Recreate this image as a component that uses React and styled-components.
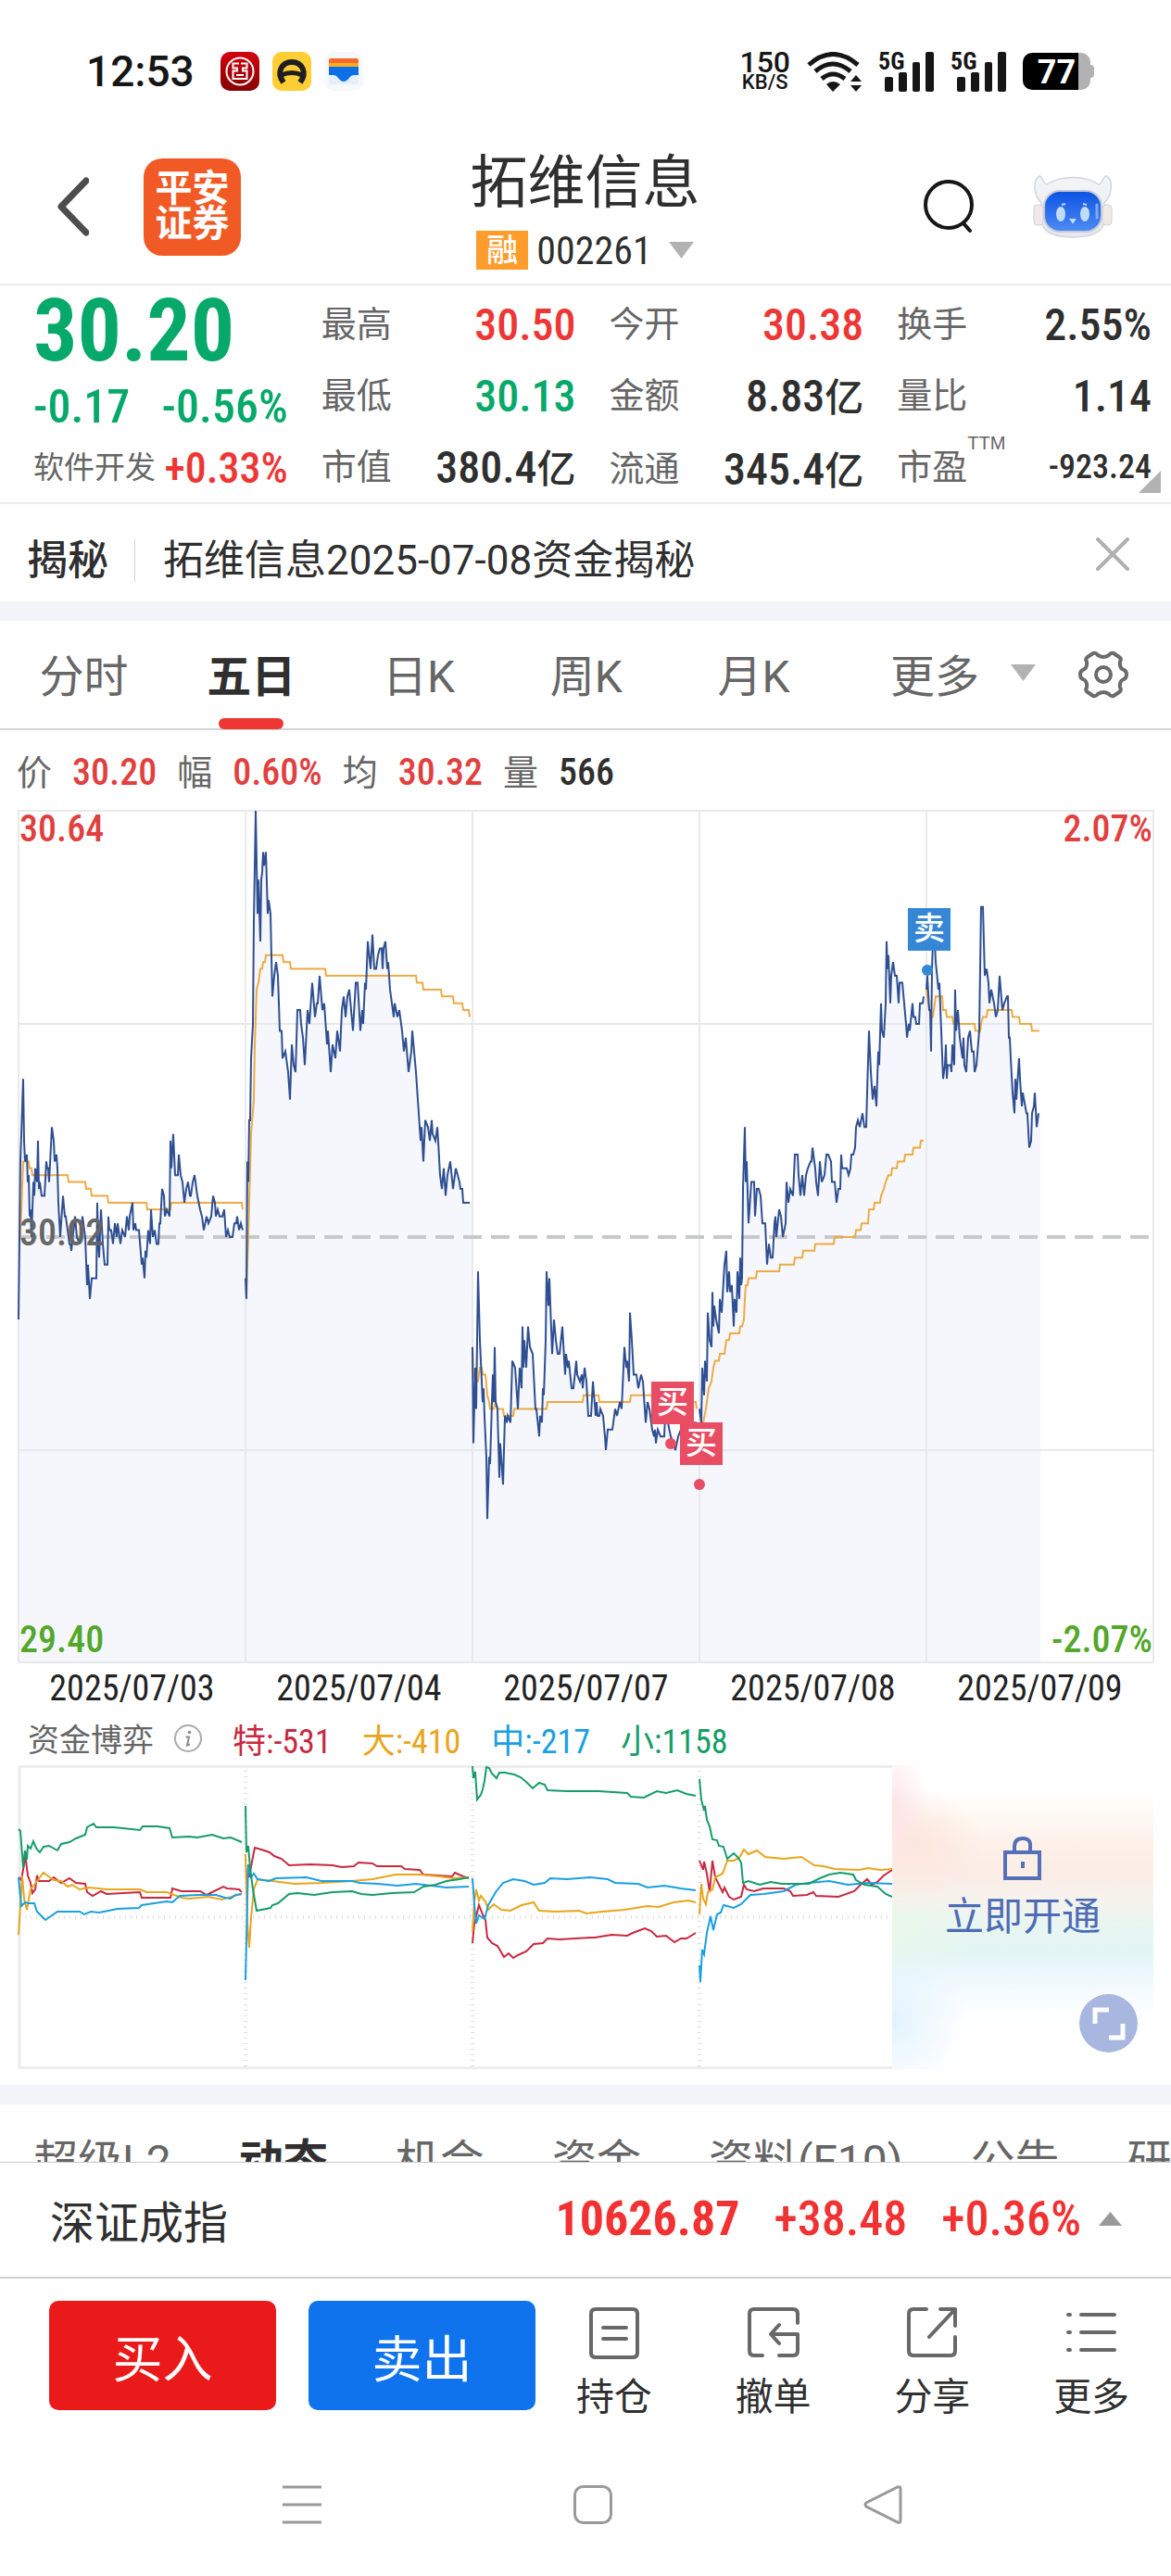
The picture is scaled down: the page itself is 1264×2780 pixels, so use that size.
import { useState } from "react";
import styled, { createGlobalStyle } from "styled-components";

const RED = "#ee3635";
const GREEN = "#07a96b";
const DARK = "#2f2f2f";

const quotes = [
    [
        { label: "最高", value: "30.50", color: RED },
        { label: "最低", value: "30.13", color: GREEN },
        { label: "市值", value: "380.4", unit: "亿" },
    ],
    [
        { label: "今开", value: "30.38", color: RED },
        { label: "金额", value: "8.83", unit: "亿" },
        { label: "流通", value: "345.4", unit: "亿" },
    ],
    [
        { label: "换手", value: "2.55%" },
        { label: "量比", value: "1.14" },
        { label: "市盈", sup: "TTM", value: "-923.24", small: true },
    ],
];

const periods = ["分时", "五日", "日K", "周K", "月K"];
const sections = ["超级L2", "动态", "机会", "资金", "资料(F10)", "公告", "研报"];
const dates = ["2025/07/03", "2025/07/04", "2025/07/07", "2025/07/08", "2025/07/09"];

// minute,cents from the 30.02 base price
const price = [
    "0,-12 2,11 3,15 5,23 6,14 7,11 9,12 10,8 11,9 12,3 13,4 14,0 16,8 17,6 18,10 20,8 21,14 22,7 23,8 25,6 28,6 30,11 31,10 32,10 33,8 36,16 38,14 39,11 41,12 42,10 43,5 45,0 48,6 50,3 51,3 55,-1 56,-1 57,-2 61,3 63,0 66,-1 69,3 72,0 74,-7 75,-4 77,-9 79,-6 84,-6 85,5 86,-1 87,-3 89,4 91,-1 93,-4 96,-4 97,3 98,1 100,1 102,-1 104,2 106,0 107,2 110,-1 112,1 115,0 117,3 119,1 120,3 123,5 124,1 126,2 127,1 130,1 133,-4 134,-3 136,-6 137,-2 138,-3 140,1 142,-1 143,4 145,0 147,1 149,-1 151,-1 152,2 153,2 155,7 157,6 158,3 160,4 163,3 164,14 165,10 167,15 169,9 172,9 173,12 175,9 177,8 179,5 181,7 183,8 185,6 186,6 188,8 190,9 193,6 196,4 198,3 200,1 203,3 205,2 208,3 210,6 212,5 213,3 215,4 217,3 220,3 222,4 224,0 226,1 228,0 231,0 233,2 235,2 236,3 238,1 240,2 242,1",
    "0,-6 1,-9 2,11 3,8 4,17 5,17 6,26 8,31 9,46 11,62 13,47 14,52 16,43 17,52 18,53 19,56 20,54 22,56 24,47 25,49 27,47 29,35 31,38 33,40 35,38 37,30 39,30 40,26 43,27 46,24 48,20 50,28 52,25 54,24 56,33 59,33 60,31 62,29 64,25 67,33 69,31 72,37 75,32 77,34 78,34 80,38 83,33 85,34 88,28 89,30 92,24 94,28 97,26 99,30 102,27 104,33 106,35 108,32 110,35 112,36 116,30 119,37 121,37 124,30 126,33 127,31 129,37 130,36 132,43 135,39 137,44 139,39 141,39 143,41 145,42 147,42 148,39 149,42 151,43 153,39 154,40 156,36 158,34 160,32 161,34 164,32 166,33 169,30 171,27 173,29 176,24 179,27 180,30 182,27 184,24 186,20 188,16 189,14 190,16 192,11 194,17 197,16 199,14 201,17 202,15 205,14 207,16 208,14 210,9 212,7 214,10 216,6 218,9 221,11 224,7 227,10 231,8 232,7 234,7 235,5 242,5",
    "0,-16 1,-30 3,-19 4,-25 6,-5 8,-15 10,-21 11,-24 12,-22 13,-26 15,-32 16,-41 18,-32 19,-33 21,-24 22,-20 23,-24 24,-16 25,-24 27,-25 29,-35 30,-30 33,-36 35,-26 37,-27 38,-26 41,-27 43,-18 46,-19 49,-25 51,-19 53,-22 54,-13 55,-19 56,-15 58,-19 60,-13 62,-16 65,-17 68,-25 69,-25 72,-29 73,-26 75,-27 76,-22 77,-23 79,-15 80,-5 82,-10 83,-6 86,-17 88,-12 90,-15 92,-17 94,-17 97,-13 100,-20 101,-17 103,-19 104,-18 107,-22 109,-22 112,-18 113,-20 116,-21 118,-20 119,-22 121,-19 123,-21 125,-26 128,-26 130,-21 133,-26 134,-24 135,-26 137,-26 138,-25 141,-26 143,-29 144,-31 146,-28 151,-28 154,-25 156,-26 159,-24 161,-25 163,-19 164,-16 166,-19 167,-18 169,-21 170,-11 172,-15 174,-20 177,-20 179,-22 182,-20 184,-21 187,-27 189,-24 191,-25 194,-28 196,-29 197,-28 198,-30 200,-28 203,-29 207,-29 208,-26 211,-27 214,-29 217,-30 219,-31 222,-29 225,-28 233,-28 240,-27 242,-27",
    "0,-25 2,-27 3,-19 5,-23 6,-18 8,-21 9,-11 11,-15 13,-16 14,-8 15,-13 16,-10 18,-12 21,-14 22,-9 24,-11 27,-4 29,-2 30,-8 32,-5 33,-8 35,-7 37,-13 38,-9 40,-11 41,-5 43,-9 44,-3 45,-7 46,-6 47,7 49,16 50,8 51,11 53,2 56,8 59,8 60,3 62,7 64,7 66,6 68,2 71,2 73,-4 75,-1 77,-3 79,-3 81,2 82,3 83,0 86,4 88,3 90,0 93,2 94,8 96,5 98,7 101,6 103,12 106,12 107,9 109,6 111,9 113,6 115,9 117,10 120,11 121,11 122,13 125,10 126,8 128,6 130,11 132,8 135,9 137,12 139,12 142,11 143,8 146,8 148,5 150,7 152,7 153,12 154,10 159,10 161,9 163,10 164,12 166,12 168,13 169,16 171,17 173,16 176,18 178,16 180,16 181,21 183,30 185,24 187,20 189,22 191,19 193,27 194,25 196,34 197,30 199,29 201,34 202,43 203,39 204,41 206,34 207,38 209,40 211,38 213,38 215,34 216,37 219,37 221,34 223,31 224,29 226,31 227,30 230,34 231,32 233,32 234,31 237,31 238,34 241,34 242,35",
    "0,36 1,38 3,33 4,33 5,27 6,39 7,43 9,43 10,40 13,36 14,37 16,30 18,23 20,25 21,28 22,23 23,25 26,25 27,24 28,28 30,25 31,36 32,30 34,33 36,29 39,26 40,29 41,25 43,24 45,29 47,30 49,27 51,27 52,24 54,25 57,30 59,48 61,48 62,43 63,38 65,39 67,37 68,34 70,36 73,34 75,32 77,33 79,38 82,33 84,34 87,35 88,35 89,29 90,29 91,26 93,21 95,18 96,23 97,20 100,26 101,23 103,19 104,21 108,18 109,18 111,13 113,14 114,18 116,19 117,21 119,16 121,18",
];

const average = [
    "2,0 3,4 5,11 11,11 12,10 14,10 15,9 53,9 54,8 72,8 73,7 78,7 79,6 96,6 97,5 138,5 139,4 164,4 165,5 241,5 242,4",
    "1,-8 3,0 4,5 6,15 9,20 10,28 12,36 14,37 16,39 18,39 19,40 21,40 22,41 40,41 41,40 48,40 49,39 86,39 87,38 184,38 185,37 191,37 192,36 211,36 212,35 224,35 225,34 234,34 235,33 241,33 242,32",
    "0,-16 1,-20 4,-21 6,-21 8,-19 10,-19 11,-20 14,-20 16,-23 18,-24 19,-25 23,-25 25,-24 27,-25 33,-25 34,-26 44,-26 45,-25 80,-25 81,-24 119,-24 120,-23 136,-23 137,-24 170,-24 171,-23 223,-23 224,-24 241,-24 242,-25",
    "3,-28 4,-27 7,-25 10,-22 13,-21 15,-19 17,-18 21,-18 22,-17 27,-17 29,-15 32,-15 33,-14 43,-14 44,-13 46,-13 48,-12 49,-9 50,-7 52,-7 53,-6 61,-6 62,-5 86,-5 87,-4 102,-4 103,-3 111,-3 112,-2 124,-2 125,-1 145,-1 146,0 168,0 169,1 174,1 175,2 182,2 183,4 188,4 189,5 195,5 196,6 199,7 201,8 204,9 207,9 208,10 213,10 214,11 221,11 222,12 230,12 231,13 238,13 239,14 242,14",
    "0,36 2,34 5,32 7,32 10,35 17,35 18,33 21,33 22,32 28,32 29,31 52,31 53,30 58,30 59,31 61,32 65,32 66,33 92,33 93,32 100,32 101,31 113,31 114,30 122,30",
];

const funds = [
    {
        name: "特", value: "-531", color: "#c7293f",
        days: [
            "0,121 3,124 6,107 7,94 9,111 10,119 13,127 15,138 18,134 20,119 22,125 33,125 38,121 46,127 55,122 62,127 72,128 74,137 80,141 89,136 95,139 131,137 133,143 164,143 166,133 176,136 196,136 203,140 221,131 225,133 238,134 241,137",
            "1,131 3,107 4,121 7,104 10,89 17,91 26,94 31,98 39,101 47,108 70,107 94,108 104,110 117,109 122,105 137,106 142,109 168,109 172,112 188,113 192,118 223,120 226,116 235,120 241,122",
            "0,192 2,171 7,151 11,161 14,167 16,186 21,192 27,195 34,207 39,203 44,208 49,205 58,201 66,193 76,192 81,187 94,188 127,186 132,186 150,183 167,184 173,181 186,176 193,179 199,185 209,184 218,191 225,187 231,187 241,181",
            "0,103 4,113 5,104 8,117 11,137 14,103 17,121 21,129 25,137 27,132 32,142 37,145 45,142 48,129 51,134 59,136 69,133 91,133 98,136 101,141 116,140 123,137 126,141 150,142 167,136 174,129 181,123 186,129 192,126 199,119 208,113",
        ],
    },
    {
        name: "大", value: "-410", color: "#e9a51d",
        days: [
            "0,183 4,119 6,144 9,156 13,134 17,129 23,121 27,116 31,119 38,124 46,125 53,131 58,129 66,134 76,132 95,134 131,134 138,137 160,137 176,143 184,144 205,142 219,145 233,141 241,139",
            "0,96 2,171 4,197 6,164 9,134 13,123 21,124 53,128 82,127 115,125 137,123 162,118 188,118 209,120 225,122 241,121",
            "0,180 2,147 4,134 7,146 9,141 14,147 17,156 23,150 31,156 41,157 53,151 66,148 72,157 90,158 115,157 123,160 140,158 164,156 189,152 201,153 217,148 233,146 241,148",
            "0,161 2,128 4,144 7,150 9,137 14,134 17,121 25,117 30,103 37,103 43,100 48,91 53,96 62,92 71,99 91,101 110,99 124,108 134,109 146,112 172,113 182,111 195,113 208,112",
        ],
    },
    {
        name: "中", value: "-217", color: "#199fe3",
        days: [
            "0,121 3,152 7,148 11,149 17,149 20,158 24,162 29,167 42,158 66,158 71,161 78,158 87,159 107,155 130,154 133,151 160,147 166,148 174,141 193,140 213,140 223,143 229,144 234,140 241,139",
            "0,232 2,144 3,107 6,121 9,117 13,123 25,125 33,122 66,121 82,125 115,125 123,127 143,128 164,130 184,128 217,132 241,131",
            "0,122 2,150 4,171 7,162 13,166 17,151 25,137 33,127 44,123 56,125 66,129 78,127 84,122 102,123 127,121 146,123 154,127 179,128 189,132 207,130 225,133 241,135",
            "0,216 1,234 3,199 5,204 8,181 12,163 15,178 19,161 23,159 26,151 37,154 45,150 55,140 69,139 91,136 104,129 118,127 140,125 160,129 182,127 208,128",
        ],
    },
    {
        name: "小", value: "1158", color: "#169c68",
        days: [
            "0,69 2,71 4,97 5,111 7,92 9,102 10,87 13,90 16,82 18,87 20,91 23,94 27,88 33,87 42,92 46,85 55,83 62,79 72,75 74,67 81,63 84,67 103,67 131,70 134,66 150,66 163,68 166,78 184,77 193,78 209,75 221,79 229,78 241,83",
            "0,44 1,94 3,87 5,111 8,134 12,157 27,154 29,151 35,149 47,139 56,138 74,140 94,137 115,136 125,139 137,140 158,138 182,137 192,131 205,129 217,125 231,123 241,121",
            "0,1 1,14 3,7 5,37 9,32 11,26 13,17 15,2 18,3 21,9 26,14 29,8 35,8 45,10 52,13 58,18 65,25 72,19 78,21 81,27 102,28 127,28 136,28 167,30 171,34 185,35 199,28 209,30 221,27 231,31 241,33",
            "0,15 2,37 5,49 6,44 8,59 11,66 14,80 19,81 21,87 26,88 30,101 37,95 41,99 45,105 47,127 53,125 65,129 77,126 89,128 118,128 130,122 140,118 152,116 166,118 169,124 178,129 192,131 201,139 208,142",
        ],
    },
];

const trades = [
    { kind: "买", x: 683, y: 616, dotX: 704, dotY: 683 },
    { kind: "买", x: 714, y: 660, dotX: 735, dotY: 727 },
    { kind: "卖", x: 960, y: 105, dotX: 981, dotY: 172 },
];

const DAY = 245;
const CHART_W = 1225;
const CHART_H = 919;

const parse = (text) => text.split(" ").map(pair => pair.split(",").map(Number));

const pricePoints = (text, day) =>
    parse(text).map(([m, c]) => `${day * DAY + m},${(460 - c * 7.42).toFixed(1)}`);

const fundPoints = (text, day) =>
    parse(text).map(([x, y]) => `${day * DAY + x + 1},${y}`).join(" ");

function PriceChart() {
    return (
        <ChartBox>
            <Plot viewBox={`0 0 ${CHART_W} ${CHART_H}`} preserveAspectRatio="none" aria-hidden="true">
                {price.map((text, day) => {
                    const points = pricePoints(text, day);
                    const end = day * DAY + (day === 4 ? 123 : DAY);
                    const lastY = points[points.length - 1].split(",")[1];
                    return (
                        <polygon
                            key={day}
                            fill="#f5f7fc"
                            points={`${day * DAY},${CHART_H} ${points.join(" ")} ${end},${lastY} ${end},${CHART_H}`}
                        />
                    );
                })}
                <g fill="none" stroke="#e9e9eb" strokeWidth="2">
                    <rect x="0" y="0" width={CHART_W} height={CHART_H} />
                    {[1, 2, 3, 4].map(i => <line key={i} x1={i * DAY} x2={i * DAY} y1="0" y2={CHART_H} />)}
                    <line x1="0" x2={CHART_W} y1="230" y2="230" />
                    <line x1="0" x2={CHART_W} y1="690" y2="690" />
                </g>
                <line x1="0" x2={CHART_W} y1="460" y2="460" stroke="#c8c9cb" strokeWidth="4" strokeDasharray="20 10" />
                <g fill="none" stroke="#eeaa44" strokeWidth="2">
                    {average.map((text, day) => <polyline key={day} points={pricePoints(text, day).join(" ")} />)}
                </g>
                <g fill="none" stroke="#2f4f92" strokeWidth="2">
                    {price.map((text, day) => <polyline key={day} points={pricePoints(text, day).join(" ")} />)}
                </g>
            </Plot>
            <AxisLabel $side="left" $at="top" $color="#e23f3f">30.64</AxisLabel>
            <AxisLabel $side="left" $at="middle" $color="#666">30.02</AxisLabel>
            <AxisLabel $side="left" $at="bottom" $color="#52a82a">29.40</AxisLabel>
            <AxisLabel $side="right" $at="top" $color="#e23f3f">2.07%</AxisLabel>
            <AxisLabel $side="right" $at="bottom" $color="#52a82a">-2.07%</AxisLabel>
            {trades.map(t => <Dot key={t.x} $sell={t.kind === "卖"} $x={t.dotX} $y={t.dotY} />)}
            {trades.map(t => <Trade key={t.x} $sell={t.kind === "卖"} $x={t.x} $y={t.y}>{t.kind}</Trade>)}
        </ChartBox>
    );
}

function FundChart() {
    return (
        <FundPlot viewBox="0 0 944 328" preserveAspectRatio="none" aria-hidden="true">
            <path d="M944 1.500H2V326.500H944" fill="none" stroke="#ededed" strokeWidth="3" />
            <g stroke="#dfdfe2" strokeWidth="4" strokeDasharray="1 5">
                {[1, 2, 3].map(i => <line key={i} x1={i * DAY + 1} x2={i * DAY + 1} y1="6" y2="325" />)}
                <line x1="8" x2="944" y1="164" y2="164" />
            </g>
            {funds.map(f => (
                <g key={f.name} fill="none" stroke={f.color} strokeWidth="2">
                    {f.days.map((text, day) => <polyline key={day} points={fundPoints(text, day)} />)}
                </g>
            ))}
        </FundPlot>
    );
}

const Triangle = ({ up, color = "#b2b2b2" }) => (
    <svg width="27" height="18" viewBox="0 0 27 18" aria-hidden="true">
        <path d={up ? "M13.500 1L26 16H1z" : "M0 0H27L13.500 18z"} fill={color} />
    </svg>
);

const BankIcon = () => (
    <svg width="42" height="42" viewBox="0 0 42 42" aria-hidden="true">
        <defs>
            <linearGradient id="bank" x1="0" y1="0" x2="0" y2="1">
                <stop offset="0" stopColor="#d5000f" />
                <stop offset="1" stopColor="#860000" />
            </linearGradient>
        </defs>
        <rect width="42" height="42" rx="10" fill="url(#bank)" />
        <circle cx="21" cy="21" r="14.500" fill="none" stroke="#fff" strokeWidth="2" />
        <path d="M20 12.500H13.500V17.500H18V20.500H13.500V29H28.500V20.500H24V17.500H28.500V12.500H22M17 25H25" fill="none" stroke="#fff" strokeWidth="2" />
    </svg>
);

const HelmetIcon = () => (
    <svg width="42" height="42" viewBox="0 0 42 42" aria-hidden="true">
        <rect width="42" height="42" rx="10" fill="#ffce34" />
        <path d="M12 33C4 22 10 11 21 11S38 22 30 33" fill="none" stroke="#1f1f1f" strokeWidth="6" />
        <path d="M10 25Q21 20 32 25" fill="none" stroke="#1f1f1f" strokeWidth="5" />
    </svg>
);

const WalletIcon = () => (
    <svg width="42" height="42" viewBox="0 0 42 42" aria-hidden="true">
        <rect width="42" height="42" rx="10" fill="#f6f8fb" />
        <path d="M7 7H35Q37 7 37 9V14H5V9Q5 7 7 7" fill="#f4692d" />
        <path d="M5 12H37V18H5z" fill="#ffae22" />
        <path d="M5 25H37V32Q37 35 34 35H8Q5 35 5 32z" fill="#e4effb" />
        <path d="M5 16H37V25H32Q29 25 27 28Q24 32 21 32T15 28Q13 25 10 25H5z" fill="#0b6fe8" />
    </svg>
);

const WifiIcon = () => (
    <svg width="59" height="43" viewBox="0 0 59 43" aria-hidden="true">
        <g fill="none" stroke="#161616" strokeWidth="5">
            <path d="M2 14Q28 -9 55 14" />
            <path d="M9 21Q28 5 47 21" />
            <path d="M16 29Q28 19 41 29" />
        </g>
        <path d="M21 35Q28 29 36 35L28 43z" fill="#161616" />
        <path d="M47 32L53 25L59 32zM47 36L53 43L59 36z" fill="#161616" />
    </svg>
);

const SignalIcon = () => (
    <svg width="54" height="43" viewBox="0 0 54 43" aria-hidden="true">
        <g fill="#161616">
            <rect x="1" y="27" width="9" height="16" rx="2" />
            <rect x="16" y="22" width="9" height="21" rx="2" />
            <rect x="31" y="11" width="8" height="32" rx="2" />
            <rect x="45" y="0" width="9" height="43" rx="2" />
        </g>
    </svg>
);

const BackIcon = () => (
    <svg width="34" height="64" viewBox="0 0 34 64" aria-hidden="true">
        <path d="M31 4L4 32L31 60" fill="none" stroke="#4d4d4d" strokeWidth="7" strokeLinecap="round" strokeLinejoin="round" />
    </svg>
);

const SearchIcon = () => (
    <svg width="54" height="58" viewBox="0 0 54 58" aria-hidden="true">
        <circle cx="27" cy="27" r="25" fill="none" stroke="#161616" strokeWidth="4" />
        <path d="M43 47L50 55" stroke="#161616" strokeWidth="4" strokeLinecap="round" />
    </svg>
);

const RobotIcon = () => (
    <svg width="86" height="70" viewBox="0 0 86 70" aria-hidden="true">
        <defs>
            <linearGradient id="face" x1="0" y1="0" x2="0" y2="1">
                <stop offset="0" stopColor="#0b52e4" />
                <stop offset="1" stopColor="#4f8cf3" />
            </linearGradient>
            <linearGradient id="shell" x1="0" y1="0" x2="0" y2="1">
                <stop offset="0" stopColor="#f4f5f7" />
                <stop offset="1" stopColor="#e6e8ec" />
            </linearGradient>
        </defs>
        <path d="M9 31C0 22 0 6 7 2C10 1 10 10 15 11C30 1 56 1 71 11C76 10 76 1 79 2C87 6 86 22 77 31V52C74 64 60 68 43 68S12 64 9 52z" fill="url(#shell)" stroke="#d3d6dc" strokeWidth="1.500" />
        <rect x="1" y="33" width="10" height="22" rx="4" fill="#f1e9e9" stroke="#cfd2d8" />
        <rect x="75" y="33" width="10" height="22" rx="4" fill="#f1e9e9" stroke="#cfd2d8" />
        <rect x="12" y="18" width="62" height="44" rx="17" fill="url(#face)" stroke="#c5cbd6" strokeWidth="2" />
        <ellipse cx="30" cy="43" rx="5" ry="8" fill="#bfdcfb" />
        <ellipse cx="56" cy="43" rx="5" ry="8" fill="#bfdcfb" />
        <path d="M31 33L35 32M54 32L58 33M41 49H45L43 52z" fill="#bfdcfb" stroke="#bfdcfb" strokeWidth="2" />
        <path d="M69 33V47" stroke="#7fa9f5" strokeWidth="3" strokeLinecap="round" />
    </svg>
);

const CloseIcon = () => (
    <svg width="36" height="36" viewBox="0 0 36 36" aria-hidden="true">
        <path d="M2 2L34 34M34 2L2 34" stroke="#b0b0b0" strokeWidth="4" strokeLinecap="round" />
    </svg>
);

const GearIcon = () => (
    <svg width="54" height="52" viewBox="0 0 54 52" aria-hidden="true">
        <g fill="none" stroke="#6b6b6b" strokeWidth="4" strokeLinejoin="round">
            <path d="M16 3Q19 2 21 5Q27 9 33 5Q35 2 38 3L44 7Q47 9 45 12Q44 19 49 21Q52 22 52 26T49 31Q44 33 45 40Q47 43 44 45L38 49Q35 50 33 47Q27 43 21 47Q19 50 16 49L10 45Q7 43 9 40Q10 33 5 31Q2 30 2 26T5 21Q10 19 9 12Q7 9 10 7z" />
            <circle cx="27" cy="26" r="8" />
        </g>
    </svg>
);

const InfoIcon = () => (
    <svg width="30" height="30" viewBox="0 0 30 30" aria-hidden="true">
        <circle cx="15" cy="15" r="14" fill="none" stroke="#aaa" strokeWidth="2" />
        <circle cx="16.500" cy="8.500" r="1.800" fill="#8a8a8a" />
        <path d="M12.500 13.500H16L14 22.500L17 21.500" fill="none" stroke="#8a8a8a" strokeWidth="2" />
    </svg>
);

const LockIcon = () => (
    <svg width="42" height="47" viewBox="0 0 42 47" aria-hidden="true">
        <rect x="2" y="17" width="37" height="28" fill="none" stroke="#5470b8" strokeWidth="4" />
        <path d="M12 17V11Q12 2 21 2T29 11V17" fill="none" stroke="#5470b8" strokeWidth="4" />
        <path d="M21 27V34" stroke="#5470b8" strokeWidth="4" />
    </svg>
);

const ExpandIcon = () => (
    <svg width="36" height="36" viewBox="0 0 36 36" aria-hidden="true">
        <path d="M3 18V3H18M33 18V33H18" fill="none" stroke="#fff" strokeWidth="5" />
    </svg>
);

const toolPaths = {
    持仓: "M9 3H49Q54 3 54 8V50Q54 55 49 55H9Q4 55 4 50V8Q4 3 9 3M17 23H42M17 35H42",
    撤单: "M55 18V8Q55 3 50 3H8Q3 3 3 8V48Q3 53 8 53H17M35 53H50Q55 53 55 48V30H28M35 20L26 30L35 40",
    分享: "M23 3H9Q4 3 4 8V48Q4 53 9 53H49Q54 53 54 48V33M38 3H54V21M54 3L26 33",
    更多: "M4 9H6M18 9H54M4 28H6M18 28H54M4 47H6M18 47H54",
};

const ToolIcon = ({ name }) => (
    <svg width="58" height="58" viewBox="0 0 58 58" aria-hidden="true">
        <path d={toolPaths[name]} fill="none" stroke="#686868" strokeWidth="4" strokeLinecap="round" strokeLinejoin="round" />
    </svg>
);

export default function App() {
    const [period, setPeriod] = useState("五日");
    const [section, setSection] = useState("动态");
    const [newsOpen, setNewsOpen] = useState(true);

    return (
        <Page>
            <GlobalStyle />
            <StatusBar>
                <Clock>12:53</Clock>
                <BankIcon />
                <HelmetIcon />
                <WalletIcon />
                <StatusRight>
                    <Speed>150<small>KB/S</small></Speed>
                    <WifiIcon />
                    <Signal><span>5G</span><SignalIcon /></Signal>
                    <Signal><span>5G</span><SignalIcon /></Signal>
                    <Battery><span>77</span></Battery>
                </StatusRight>
            </StatusBar>

            <Header>
                <HeaderLeft>
                    <PlainButton aria-label="返回"><BackIcon /></PlainButton>
                    <Logo href="#home">平安<br />证券</Logo>
                </HeaderLeft>
                <HeaderTitle>
                    <h1>拓维信息</h1>
                    <CodeButton>
                        <Margin>融</Margin>
                        002261
                        <Triangle />
                    </CodeButton>
                </HeaderTitle>
                <HeaderRight>
                    <PlainButton aria-label="搜索"><SearchIcon /></PlainButton>
                    <PlainButton aria-label="助手"><RobotIcon /></PlainButton>
                </HeaderRight>
            </Header>

            <Quote>
                <div>
                    <Price>30.20</Price>
                    <Change><span>-0.17</span><span>-0.56%</span></Change>
                    <Industry href="#industry">软件开发<b>+0.33%</b></Industry>
                </div>
                {quotes.map((column, i) => (
                    <Stats key={i}>
                        {column.map(s => (
                            <Stat key={s.label}>
                                <dt>{s.label}{s.sup && <sup>{s.sup}</sup>}</dt>
                                <StatValue $color={s.color} $small={s.small}>
                                    {s.value}{s.unit && <small>{s.unit}</small>}
                                </StatValue>
                            </Stat>
                        ))}
                    </Stats>
                ))}
                <Corner viewBox="0 0 24 24" aria-hidden="true"><path d="M24 0V24H0z" fill="#b2b2b2" /></Corner>
            </Quote>

            {newsOpen && (
                <News>
                    <strong>揭秘</strong>
                    <a href="#news">拓维信息2025-07-08资金揭秘</a>
                    <CloseButton aria-label="关闭" onClick={() => setNewsOpen(false)}><CloseIcon /></CloseButton>
                </News>
            )}
            <Band />

            <PeriodBar>
                <Periods>
                    {periods.map(p => (
                        <Period key={p} $active={p === period} onClick={() => setPeriod(p)}>{p}</Period>
                    ))}
                </Periods>
                <MorePeriods>更多<Triangle /></MorePeriods>
                <PlainButton aria-label="设置"><GearIcon /></PlainButton>
            </PeriodBar>

            <Summary>
                <dt>价</dt><dd>30.20</dd>
                <dt>幅</dt><dd>0.60%</dd>
                <dt>均</dt><dd>30.32</dd>
                <dt>量</dt><Volume>566</Volume>
            </Summary>

            <ChartArea>
                <PriceChart />
                <Dates>
                    {dates.map(d => <time key={d}>{d}</time>)}
                </Dates>
                <Legend>
                    <span>资金博弈</span>
                    <InfoIcon />
                    {funds.map(f => <LegendItem key={f.name} $color={f.color}>{f.name}:{f.value}</LegendItem>)}
                </Legend>
                <FundRow>
                    <FundChart />
                    <Locked>
                        <Unlock><LockIcon />立即开通</Unlock>
                        <Expand aria-label="全屏"><ExpandIcon /></Expand>
                    </Locked>
                </FundRow>
            </ChartArea>
            <Band />

            <Sections>
                {sections.map(s => (
                    <Section key={s} $active={s === section} onClick={() => setSection(s)}>{s}</Section>
                ))}
            </Sections>

            <IndexBar>
                <span>深证成指</span>
                <IndexValues>
                    <b>10626.87</b>
                    <span>+38.48</span>
                    <span>+0.36%</span>
                </IndexValues>
                <Triangle up color="#999" />
            </IndexBar>

            <Actions>
                <TradeButton $color="#eb1a1a">买入</TradeButton>
                <TradeButton $color="#0f73ee">卖出</TradeButton>
                <Tools>
                    {Object.keys(toolPaths).map(name => (
                        <Tool key={name}><ToolIcon name={name} />{name}</Tool>
                    ))}
                </Tools>
            </Actions>

            <SystemNav>
                <PlainButton aria-label="最近任务">
                    <svg width="42" height="42" viewBox="0 0 42 42"><path d="M0 2H42M0 21H42M0 40H42" stroke="#999" strokeWidth="3" /></svg>
                </PlainButton>
                <PlainButton aria-label="主页">
                    <svg width="42" height="42" viewBox="0 0 42 42"><rect x="1.500" y="1.500" width="39" height="39" rx="9" fill="none" stroke="#999" strokeWidth="3" /></svg>
                </PlainButton>
                <PlainButton aria-label="后退">
                    <svg width="42" height="42" viewBox="0 0 42 42"><path d="M40 4V38Q40 41 37 40L3 23Q1 21 3 19L37 2Q40 1 40 4z" fill="none" stroke="#999" strokeWidth="3" /></svg>
                </PlainButton>
            </SystemNav>
        </Page>
    );
}

const GlobalStyle = createGlobalStyle`
    * {
        box-sizing: border-box;
    }

    body {
        margin: 0;
        background-color: #fff;
    }

    button {
        border: none;
        padding: 0;
        margin: 0;
        background: none;
        color: inherit;
        font: inherit;
        cursor: pointer;
    }

    a {
        color: inherit;
        text-decoration: none;
    }

    svg {
        display: block;
        flex-shrink: 0;
    }

    dl, dt, dd, h1 {
        margin: 0;
        font-weight: inherit;
    }
`

const Page = styled.div`
    width: 100%;
    overflow: hidden;
    font-family: "Roboto Condensed", Roboto, "Noto Sans CJK SC", sans-serif;
    color: ${DARK};
`

const PlainButton = styled.button`
    display: flex;
    align-items: center;
`

const StatusBar = styled.div`
    height: 112px;
    padding: 42px 87px 0 93px;
    display: flex;
    align-items: center;
    gap: 14px;
    font-family: Roboto, sans-serif;
    color: #161616;
`

const Clock = styled.span`
    margin-right: 14px;
    font-size: 46px;
    font-weight: 500;
`

const StatusRight = styled.div`
    margin-left: auto;
    display: flex;
    align-items: center;
    gap: 18px;
`

const Speed = styled.span`
    display: flex;
    flex-direction: column;
    align-items: center;
    font-size: 32px;
    line-height: 24px;
    font-weight: 500;

    small {
        font-size: 22px;
        line-height: 20px;
    }
`

const Signal = styled.span`
    position: relative;
    padding-left: 6px;

    span {
        position: absolute;
        left: 0;
        top: 0;
        font-family: "Roboto Condensed", Roboto, sans-serif;
        font-size: 26px;
        line-height: 20px;
        font-weight: 700;
    }
`

const Battery = styled.span`
    width: 73px;
    height: 40px;
    border-radius: 10px;
    background: linear-gradient(90deg, #000 82%, #b1b1b1 82%);
    position: relative;
    color: #fff;
    font-size: 36px;
    line-height: 42px;
    font-weight: 700;
    text-align: center;

    &::after {
        content: "";
        position: absolute;
        left: 100%;
        top: 13px;
        width: 4px;
        height: 14px;
        border-radius: 0 4px 4px 0;
        background-color: #b1b1b1;
    }
`

const Header = styled.header`
    height: 196px;
    padding: 28px 63px 0 62px;
    border-bottom: 2px solid #ececec;
    display: grid;
    grid-template-columns: 1fr auto 1fr;
    align-items: center;
`

const HeaderLeft = styled.div`
    display: flex;
    align-items: center;
    gap: 59px;
`

const Logo = styled.a`
    width: 105px;
    height: 105px;
    padding-top: 14px;
    border-radius: 20px;
    background-color: #f15a24;
    color: #fff;
    font-size: 40px;
    line-height: 38px;
    font-weight: 700;
    text-align: center;
`

const HeaderTitle = styled.div`
    align-self: end;
    display: flex;
    flex-direction: column;
    align-items: center;

    h1 {
        font-size: 62px;
        line-height: 72px;
    }
`

const CodeButton = styled.button`
    height: 72px;
    display: flex;
    align-items: center;
    gap: 9px;
    font-size: 42px;

    svg {
        margin-left: 9px;
    }
`

const Margin = styled.span`
    width: 56px;
    height: 42px;
    background-color: #ff9c2b;
    color: #fff;
    font-size: 34px;
    line-height: 42px;
    font-weight: 500;
    text-align: center;
`

const HeaderRight = styled.div`
    display: flex;
    justify-content: flex-end;
    align-items: center;
    gap: 64px;
`

const Quote = styled.section`
    height: 236px;
    padding: 0 21px 0 36px;
    border-bottom: 2px solid #ececec;
    display: grid;
    grid-template-columns: repeat(4, 1fr);
    gap: 36px;
    position: relative;
`

const Price = styled.div`
    font-size: 94px;
    line-height: 98px;
    font-weight: 700;
    color: ${GREEN};
`

const Change = styled.div`
    display: flex;
    justify-content: space-between;
    font-size: 50px;
    line-height: 66px;
    font-weight: 500;
    color: ${GREEN};
`

const Industry = styled.a`
    display: flex;
    justify-content: space-between;
    font-size: 33px;
    line-height: 66px;
    color: #666;

    b {
        font-size: 46px;
        font-weight: 500;
        color: ${RED};
    }
`

const Stats = styled.dl`
    padding-top: 4px;
`

const Stat = styled.div`
    display: flex;
    justify-content: space-between;
    line-height: 77px;

    dt {
        position: relative;
        font-size: 38px;
        color: #666;
    }

    sup {
        position: absolute;
        left: 100%;
        top: 0;
        font-family: "Liberation Sans", sans-serif;
        font-size: 20px;
        line-height: 24px;
    }
`

const StatValue = styled.dd`
    font-size: ${p => p.$small ? 36 : 48}px;
    font-weight: 500;
    color: ${p => p.$color || DARK};

    small {
        font-size: 42px;
    }
`

const Corner = styled.svg`
    position: absolute;
    right: 11px;
    bottom: 10px;
    width: 24px;
    height: 24px;
`

const News = styled.section`
    height: 105px;
    padding: 16px 45px 0 29px;
    display: flex;
    align-items: center;
    font-family: Roboto, "Noto Sans CJK SC", sans-serif;
    font-size: 44px;
    line-height: 46px;

    strong {
        padding-right: 28px;
        border-right: 1px solid #d5d5d5;
        font-weight: 500;
    }

    a {
        margin-left: 30px;
    }
`

const CloseButton = styled(PlainButton)`
    margin: 0 0 14px auto;
`

const Band = styled.div`
    height: 21px;
    background-color: #f3f4f9;
`

const PeriodBar = styled.nav`
    height: 118px;
    padding-right: 46px;
    border-bottom: 2px solid #d4d4d4;
    display: flex;
    align-items: center;
    gap: 46px;
    font-family: Roboto, "Noto Sans CJK SC", sans-serif;
    font-size: 48px;
    color: #666;
`

const Periods = styled.div`
    flex: 1;
    height: 100%;
    margin-right: 11px;
    display: grid;
    grid-template-columns: repeat(5, 1fr);
`

const Period = styled.button`
    position: relative;
    padding-bottom: 4px;
    font-weight: ${p => p.$active ? 700 : 400};
    color: ${p => p.$active ? DARK : "#666"};

    &::after {
        content: "";
        display: ${p => p.$active ? "block" : "none"};
        position: absolute;
        left: 50%;
        bottom: -1px;
        width: 70px;
        height: 12px;
        margin-left: -35px;
        border-radius: 6px;
        background-color: ${RED};
    }
`

const MorePeriods = styled.button`
    padding-bottom: 4px;
    display: flex;
    align-items: center;
    gap: 34px;
`

const Summary = styled.dl`
    height: 87px;
    padding: 0 18px;
    display: flex;
    align-items: baseline;
    gap: 22px;
    font-size: 40px;
    line-height: 92px;

    dt {
        font-size: 38px;
        color: #666;
    }

    dd {
        font-weight: 500;
        color: #e23f3f;
    }
`

const Volume = styled.dd`
    && {
        color: ${DARK};
    }
`

const ChartArea = styled.section`
    padding: 0 19px 17px 20px;
`

const ChartBox = styled.div`
    position: relative;
    height: ${CHART_H}px;
`

const Plot = styled.svg`
    width: 100%;
    height: 100%;
    overflow: visible;
`

const axisOffset = {
    top: "top: 0;",
    middle: "top: 50%; margin-top: -24px;",
    bottom: "bottom: 4px;",
}

const AxisLabel = styled.span`
    position: absolute;
    ${p => p.$side}: 1px;
    ${p => axisOffset[p.$at]}
    font-size: 40px;
    line-height: 40px;
    font-weight: 500;
    color: ${p => p.$color};
`

const Trade = styled.span`
    position: absolute;
    left: ${p => p.$x / CHART_W * 100}%;
    top: ${p => p.$y}px;
    width: 46px;
    height: 46px;
    background-color: ${p => p.$sell ? "#3587d6" : "#e84d64"};
    color: #fff;
    font-size: 34px;
    line-height: 44px;
    font-weight: 500;
    text-align: center;
`

const Dot = styled.span`
    position: absolute;
    left: ${p => p.$x / CHART_W * 100}%;
    top: ${p => p.$y}px;
    width: 12px;
    height: 12px;
    margin: -6px;
    border-radius: 50%;
    background-color: ${p => p.$sell ? "#3587d6" : "#e84d64"};
`

const Dates = styled.div`
    display: grid;
    grid-template-columns: repeat(5, 1fr);
    font-size: 38px;
    line-height: 56px;
    text-align: center;
    color: #222;
`

const Legend = styled.div`
    height: 55px;
    padding: 0 0 4px 10px;
    display: flex;
    align-items: center;
    font-size: 34px;
    color: #666;

    svg {
        margin-left: 22px;
    }
`

const LegendItem = styled.span`
    margin-left: 33px;
    font-size: 36px;
    color: ${p => p.$color};
`

const FundRow = styled.div`
    height: 328px;
    margin-left: -1px;
    display: flex;
`

const FundPlot = styled.svg`
    flex: 1;
    min-width: 0;
    height: 100%;
`

const Locked = styled.div`
    flex: 0 0 282px;
    position: relative;
    display: flex;
    justify-content: center;
    background:
        radial-gradient(40px 70px at 0 14%, #fde3e6, rgba(253, 227, 230, 0)),
        radial-gradient(70px 60px at 10% 26%, #fde6dd, rgba(253, 230, 221, 0)),
        radial-gradient(80px 80px at 0 84%, #e2f3fe, rgba(226, 243, 254, 0)),
        radial-gradient(90px 50px at 0 56%, #e9f8ea, rgba(233, 248, 234, 0)),
        linear-gradient(#fff 8%, #fffaf5 16%, #fdf1e9 26%, #fbede6 35%, #f6f2ec 44%, #e8f6f1 53%, #e4f5f4 61%, #edf8fe 69%, #fafdff 78%, #fff 86%);
`

const Unlock = styled.button`
    align-self: flex-start;
    padding-top: 77px;
    display: flex;
    flex-direction: column;
    align-items: center;
    gap: 10px;
    font-size: 42px;
    line-height: 60px;
    color: #4d6bb5;
`

const Expand = styled.button`
    position: absolute;
    right: 17px;
    bottom: 18px;
    width: 63px;
    height: 63px;
    border-radius: 50%;
    background-color: #a7b7df;
    display: flex;
    align-items: center;
    justify-content: center;
`

const Sections = styled.nav`
    height: 62px;
    padding-left: 36px;
    overflow: hidden;
    display: flex;
    align-items: flex-start;
    gap: 73px;
    font-family: Roboto, "Noto Sans CJK SC", sans-serif;
    font-size: 48px;
    line-height: 124px;
    color: #666;
    white-space: nowrap;
`

const Section = styled.button`
    flex-shrink: 0;
    font-weight: ${p => p.$active ? 700 : 400};
    color: ${p => p.$active ? DARK : "#666"};
`

const IndexBar = styled.section`
    height: 124px;
    padding: 0 52px 2px 54px;
    border-top: 1px solid #c8c8c8;
    display: flex;
    align-items: center;
    font-size: 48px;
`

const IndexValues = styled.div`
    margin: 0 18px 0 auto;
    display: flex;
    gap: 37px;
    font-size: 52px;
    font-weight: 500;
    color: #f23232;
`

const Actions = styled.section`
    padding: 24px 0 0 53px;
    border-top: 2px solid #cfcfcf;
    display: flex;
    align-items: flex-start;
    gap: 35px;
`

const TradeButton = styled.button`
    flex: 0 0 245px;
    height: 118px;
    border-radius: 10px;
    background-color: ${p => p.$color};
    color: #fff;
    font-size: 54px;
`

const Tools = styled.div`
    flex: 1;
    margin-left: -36px;
    display: grid;
    grid-template-columns: repeat(4, 1fr);
`

const Tool = styled.button`
    padding-top: 6px;
    display: flex;
    flex-direction: column;
    align-items: center;
    gap: 10px;
    font-size: 41px;
    line-height: 60px;
`

const SystemNav = styled.nav`
    padding: 65px 290px 56px 305px;
    display: flex;
    justify-content: space-between;
`
